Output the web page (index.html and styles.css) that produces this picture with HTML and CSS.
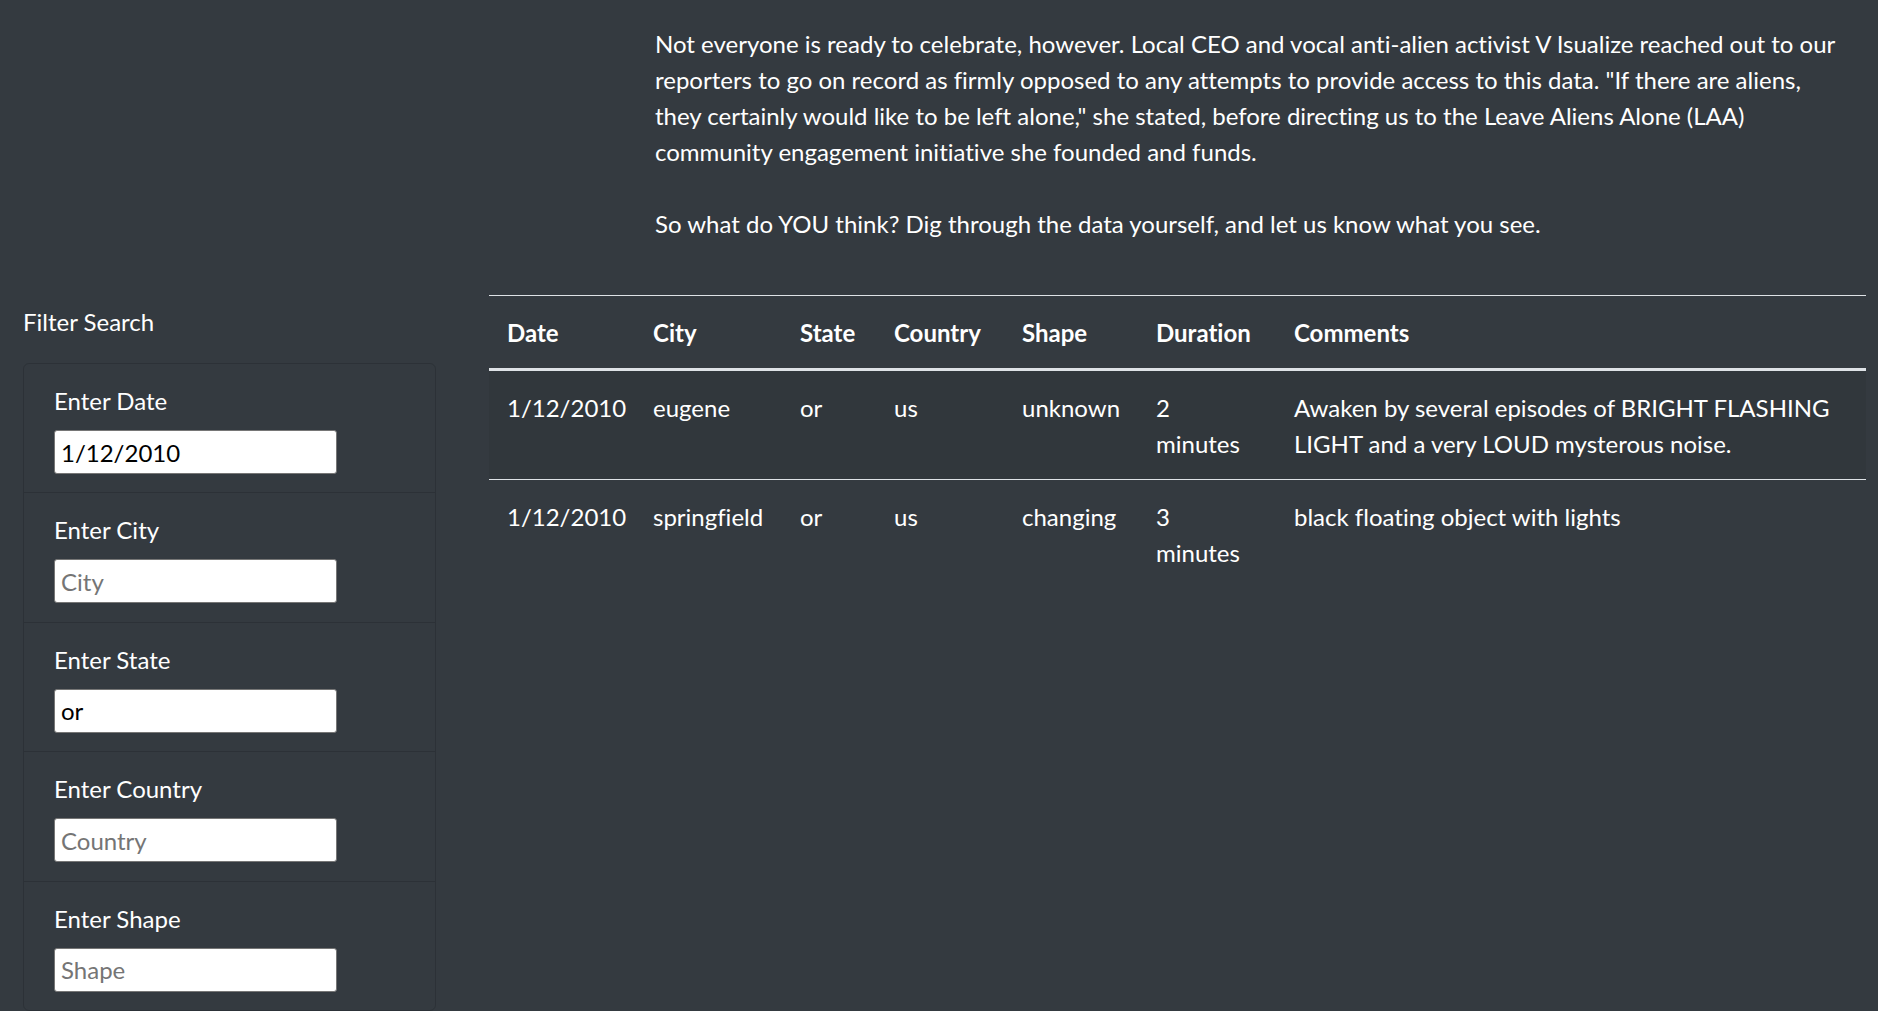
FILE: index.html
```html
<!DOCTYPE html>
<html lang="en">
<head>
<meta charset="utf-8">
<title>UFO Sightings</title>
<link rel="stylesheet" href="styles.css">
</head>
<body>
<div class="intro">
  <p class="intro-text">Not everyone is ready to celebrate, however. Local CEO and vocal anti-alien activist V Isualize reached out to our reporters to go on record as firmly opposed to any attempts to provide access to this data. "If there are aliens, they certainly would like to be left alone," she stated, before directing us to the Leave Aliens Alone (LAA) community engagement initiative she founded and funds.<br><br>So what do YOU think? Dig through the data yourself, and let us know what you see.</p>
</div>
<div class="main">
  <aside class="filters">
    <div class="filter-title">Filter Search</div>
    <ul class="filter-list">
      <li class="filter-item">
        <label class="filter-label" for="datetime">Enter Date</label>
        <input class="filter-input" id="datetime" type="text" placeholder="1/10/2010" value="1/12/2010">
      </li>
      <li class="filter-item">
        <label class="filter-label" for="city">Enter City</label>
        <input class="filter-input" id="city" type="text" placeholder="City">
      </li>
      <li class="filter-item">
        <label class="filter-label" for="state">Enter State</label>
        <input class="filter-input" id="state" type="text" placeholder="State" value="or">
      </li>
      <li class="filter-item">
        <label class="filter-label" for="country">Enter Country</label>
        <input class="filter-input" id="country" type="text" placeholder="Country">
      </li>
      <li class="filter-item">
        <label class="filter-label" for="shape">Enter Shape</label>
        <input class="filter-input" id="shape" type="text" placeholder="Shape">
      </li>
    </ul>
  </aside>
  <section class="results">
    <table class="ufo-table">
      <colgroup>
        <col class="c-date"><col class="c-city"><col class="c-state"><col class="c-country"><col class="c-shape"><col class="c-duration"><col class="c-comments">
      </colgroup>
      <thead>
        <tr><th>Date</th><th>City</th><th>State</th><th>Country</th><th>Shape</th><th>Duration</th><th>Comments</th></tr>
      </thead>
      <tbody>
        <tr class="odd"><td>1/12/2010</td><td>eugene</td><td>or</td><td>us</td><td>unknown</td><td>2 minutes</td><td>Awaken by several episodes of BRIGHT FLASHING LIGHT and a very LOUD mysterous noise.</td></tr>
        <tr><td>1/12/2010</td><td>springfield</td><td>or</td><td>us</td><td>changing</td><td>3 minutes</td><td>black floating object with lights</td></tr>
      </tbody>
    </table>
  </section>
</div>
</body>
</html>
```
FILE: styles.css
```css
html, body {
  margin: 0;
  padding: 0;
}
body {
  background: #343a40;
  color: #fff;
  font-family: Lato, "Open Sans", sans-serif;
  font-size: 24px;
  line-height: 36px;
  font-variant-ligatures: none;
  overflow: hidden;
  height: 1011px;
}
.intro {
  padding-top: 26px;
}
.intro-text {
  margin: 0 0 0 655px;
  width: 1190px;
}
.main {
  display: flex;
  align-items: flex-start;
}
.filters {
  margin-left: 23px;
  width: 413px;
  flex: none;
}
.filter-title {
  margin-top: 62px;
  font-size: 24px;
  line-height: 36px;
}
.filter-list {
  list-style: none;
  margin: 23px 0 0;
  padding: 0;
  border: 1px solid rgba(0, 0, 0, 0.14);
  border-radius: 6px;
}
.filter-item {
  display: flex;
  flex-direction: column;
  align-items: flex-start;
  padding: 19px 30px 17.4px;
  border-bottom: 1px solid rgba(0, 0, 0, 0.14);
}
.filter-item:last-child {
  border-bottom: none;
}
.filter-label {
  display: block;
  margin-bottom: 11px;
}
.filter-input {
  box-sizing: border-box;
  width: 283px;
  height: 44px;
  margin: 0 0 1px;
  padding: 0 6px;
  border: 1px solid #767676;
  border-radius: 3px;
  background: #fff;
  color: #000;
  font-family: inherit;
  font-size: 24px;
  line-height: 36px;
  font-variant-ligatures: none;
  outline: none;
}
.filter-input::placeholder {
  color: #757575;
}
.results {
  margin-left: 53px;
  padding-top: 53px;
  flex: 1;
  margin-right: 12px;
}
.ufo-table {
  width: 100%;
  table-layout: fixed;
  border-collapse: collapse;
}
.c-date { width: 146px; }
.c-city { width: 147px; }
.c-state { width: 94px; }
.c-country { width: 128px; }
.c-shape { width: 134px; }
.c-duration { width: 138px; }
.ufo-table th,
.ufo-table td {
  padding: 19px 18px 17px;
  text-align: left;
  vertical-align: top;
  border-top: 1px solid #dee2e6;
}
.ufo-table th {
  font-weight: 700;
  border-bottom: 3px solid #dee2e6;
}
.ufo-table tbody tr.odd {
  background: rgba(0, 0, 0, 0.05);
}
```
